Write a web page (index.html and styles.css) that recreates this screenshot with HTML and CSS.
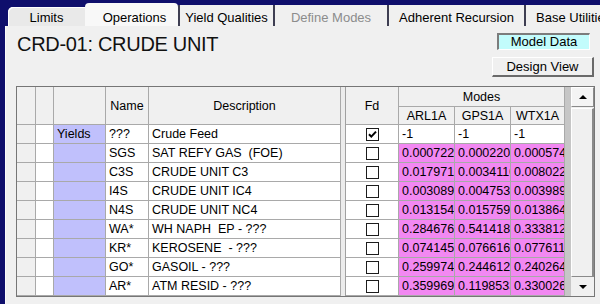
FILE: index.html
```html
<!DOCTYPE html>
<html>
<head>
<meta charset="utf-8">
<link rel="stylesheet" href="styles.css">
</head>
<body>
<div class="window">
  <div class="tabs">
    <div class="tab tab-limits">Limits</div>
    <div class="tab tab-active">Operations</div>
    <div class="tab tab-sep tab-yq">Yield Qualities</div>
    <div class="tab tab-sep tab-dm">Define Modes</div>
    <div class="tab tab-sep tab-ar">Adherent Recursion</div>
    <div class="tab tab-sep tab-bu">Base Utilities</div>
  </div>
  <div class="panel">
    <div class="topbar">
      <h1 class="title">CRD-01: CRUDE UNIT</h1>
      <div class="buttons">
        <div class="btn btn-model">Model Data</div>
        <div class="btn btn-design">Design View</div>
      </div>
    </div>
    <div class="gridbox">
      <div class="grid">
        <div class="c h h2"></div>
        <div class="c h h2"></div>
        <div class="c h h2"></div>
        <div class="c h h2">Name</div>
        <div class="c h h2">Description</div>
        <div class="sep"></div>
        <div class="c h h2">Fd</div>
        <div class="c h modes">Modes</div>
        <div class="bar"></div>
        <div class="c h">ARL1A</div>
        <div class="c h">GPS1A</div>
        <div class="c h">WTX1A</div>

        <div class="c rh"></div><div class="c w"></div><div class="c cat">Yields</div><div class="c w">???</div><div class="c w">Crude Feed</div>
        <div class="c w fd"><span class="cb"><svg width="11" height="11" viewBox="0 0 11 11"><path d="M2 5.2 L4.3 7.6 L9 2.6" fill="none" stroke="#000" stroke-width="2"/></svg></span></div>
        <div class="c w">-1</div><div class="c w">-1</div><div class="c w">-1</div>

        <div class="c rh"></div><div class="c w"></div><div class="c cat"></div><div class="c w">SGS</div><div class="c w">SAT REFY GAS  (FOE)</div>
        <div class="c w fd"><span class="cb"></span></div>
        <div class="c pk">0.0007224</div><div class="c pk">0.0002205</div><div class="c pk">0.0005741</div>

        <div class="c rh"></div><div class="c w"></div><div class="c cat"></div><div class="c w">C3S</div><div class="c w">CRUDE UNIT C3</div>
        <div class="c w fd"><span class="cb"></span></div>
        <div class="c pk">0.0179710</div><div class="c pk">0.0034110</div><div class="c pk">0.0080223</div>

        <div class="c rh"></div><div class="c w"></div><div class="c cat"></div><div class="c w">I4S</div><div class="c w">CRUDE UNIT IC4</div>
        <div class="c w fd"><span class="cb"></span></div>
        <div class="c pk">0.0030895</div><div class="c pk">0.0047531</div><div class="c pk">0.0039895</div>

        <div class="c rh"></div><div class="c w"></div><div class="c cat"></div><div class="c w">N4S</div><div class="c w">CRUDE UNIT NC4</div>
        <div class="c w fd"><span class="cb"></span></div>
        <div class="c pk">0.0131544</div><div class="c pk">0.0157599</div><div class="c pk">0.0138644</div>

        <div class="c rh"></div><div class="c w"></div><div class="c cat"></div><div class="c w">WA*</div><div class="c w">WH NAPH  EP - ???</div>
        <div class="c w fd"><span class="cb"></span></div>
        <div class="c pk">0.2846766</div><div class="c pk">0.5414188</div><div class="c pk">0.3338122</div>

        <div class="c rh"></div><div class="c w"></div><div class="c cat"></div><div class="c w">KR*</div><div class="c w">KEROSENE  - ???</div>
        <div class="c w fd"><span class="cb"></span></div>
        <div class="c pk">0.0741455</div><div class="c pk">0.0766166</div><div class="c pk">0.0776111</div>

        <div class="c rh"></div><div class="c w"></div><div class="c cat"></div><div class="c w">GO*</div><div class="c w">GASOIL - ???</div>
        <div class="c w fd"><span class="cb"></span></div>
        <div class="c pk">0.2599744</div><div class="c pk">0.2446122</div><div class="c pk">0.2402644</div>

        <div class="c rh"></div><div class="c w"></div><div class="c cat"></div><div class="c w">AR*</div><div class="c w">ATM RESID - ???</div>
        <div class="c w fd"><span class="cb"></span></div>
        <div class="c pk">0.3599699</div><div class="c pk">0.1198533</div><div class="c pk">0.3300266</div>
      </div>
      <div class="scrollbar">
        <div class="sb-btn"><span class="arrow-up"></span></div>
        <div class="sb-thumb"></div>
        <div class="sb-end"><span class="arrow-down"></span></div>
      </div>
    </div>
  </div>
</div>
</body>
</html>
```
FILE: styles.css
```css
html, body {
  margin: 0;
  padding: 0;
}
body {
  width: 600px;
  height: 304px;
  overflow: hidden;
  background: #f0f0f0;
  font-family: "Liberation Sans", Arial, sans-serif;
  color: #000;
}
.window {
  display: flex;
  flex-direction: column;
  height: 304px;
  border-left: 5px solid #0f0f6c;
  box-sizing: border-box;
}
.tabs {
  display: flex;
  align-items: flex-end;
  height: 26px;
  background: #0f0f6c;
  overflow: hidden;
  flex: none;
}
.tab {
  flex: none;
  box-sizing: border-box;
  height: 21px;
  padding-top: 5px;
  font-size: 13px;
  line-height: 16px;
  text-align: center;
  background: #f0f0f0;
  white-space: nowrap;
}
.tab-limits {
  margin-left: 3px;
  width: 77px;
  height: 19px;
  padding-top: 3px;
  background: #e9e9e9;
  border-top-left-radius: 5px;
  box-shadow: inset 1px 1px 0 #ffffff;
}
.tab-active {
  width: 93px;
  height: 23px;
  padding-top: 7px;
  padding-left: 6px;
  background: #f8f8f8;
  border-radius: 4px 4px 0 0;
}
.tab-sep {
  border-left: 2px solid #3e3e52;
}
.tab-yq { width: 95px; }
.tab-dm { width: 114px; color: #8c8c8c; }
.tab-ar { width: 137px; }
.tab-bu { width: 100px; text-align: left; padding-left: 10px; }

.panel {
  flex: 1;
  border-left: 1px solid #fbfbfb;
  background: #f0f0f0;
}
.topbar {
  display: flex;
  justify-content: space-between;
  height: 60px;
}
.title {
  margin: 0;
  padding: 6px 0 0 11px;
  font-size: 20px;
  line-height: 24px;
  font-weight: normal;
  letter-spacing: -0.3px;
  color: #111;
}
.buttons {
  display: flex;
  flex-direction: column;
  align-items: flex-end;
  padding-top: 7px;
}
.btn {
  box-sizing: border-box;
  font-size: 13px;
  text-align: center;
  white-space: nowrap;
}
.btn-model {
  width: 93px;
  height: 17px;
  line-height: 14px;
  margin-right: 10px;
  background: #c2fcfc;
  border-top: 2px solid #7c7c7c;
  border-left: 2px solid #7c7c7c;
  border-right: 1px solid #ffffff;
  border-bottom: 1px solid #ffffff;
}
.btn-design {
  width: 102px;
  height: 20px;
  line-height: 17px;
  margin-top: 7px;
  margin-right: 6px;
  background: #f0f0f0;
  border-top: 1px solid #ffffff;
  border-left: 1px solid #ffffff;
  border-right: 2px solid #6a6a6a;
  border-bottom: 2px solid #6a6a6a;
}

.gridbox {
  display: flex;
  margin-left: 10px;
  width: 579px;
  box-sizing: border-box;
  border: 1px solid #767676;
}
.grid {
  display: grid;
  grid-template-columns: 19px 18px 52px 43px 192px 5px 53px 56px 56px 54px 6px;
  grid-template-rows: 20px 18px repeat(9, 19px);
  width: 554px;
  flex: none;
}
.c {
  box-sizing: border-box;
  border-right: 1px solid #a9a9a9;
  border-bottom: 1px solid #a9a9a9;
  overflow: hidden;
  white-space: pre;
  font-size: 12.5px;
  display: flex;
  align-items: center;
  padding-left: 3px;
}
.h {
  background: #f0f0f0;
  justify-content: center;
  padding-left: 0;
}
.h2 { grid-row: span 2; }
.modes { grid-column: span 3; }
.sep {
  grid-column: 6;
  grid-row: 1 / -1;
  background: #ececec;
  border-right: 1px solid #a0a0a0;
  box-sizing: border-box;
}
.bar {
  grid-column: 11;
  grid-row: 1 / -1;
  background: #c6c6c6;
}
.rh { background: #f0f0f0; }
.w { background: #ffffff; }
.cat { background: #c0c0fc; }
.pk { background: #f288f2; }
.fd {
  justify-content: center;
  padding-left: 0;
}
.cb {
  display: flex;
  align-items: center;
  justify-content: center;
  width: 13px;
  height: 13px;
  box-sizing: border-box;
  border: 1px solid #1c1c1c;
  background: #ffffff;
}

.scrollbar {
  flex: 1;
  display: flex;
  flex-direction: column;
  background: #f0f0f0;
}
.sb-btn {
  height: 20px;
  box-sizing: border-box;
  display: flex;
  align-items: center;
  justify-content: center;
  background: #f4f4f4;
  border-top: 1px solid #ffffff;
  border-left: 1px solid #ffffff;
  border-right: 1px solid #8a8a8a;
  border-bottom: 1px solid #8a8a8a;
}
.sb-thumb {
  flex: 1;
  margin-top: 1px;
  box-sizing: border-box;
  background: #f0f0f0;
  border-top: 1px solid #ffffff;
  border-left: 1px solid #ffffff;
  border-right: 2px solid #8a8a8a;
  border-bottom: 1px solid #8a8a8a;
}
.sb-end {
  height: 19px;
  display: flex;
  align-items: center;
  justify-content: center;
}
.arrow-up {
  width: 0;
  height: 0;
  border-left: 4px solid transparent;
  border-right: 4px solid transparent;
  border-bottom: 4px solid #000;
}
.arrow-down {
  width: 0;
  height: 0;
  border-left: 4px solid transparent;
  border-right: 4px solid transparent;
  border-top: 4px solid #000;
}
```
